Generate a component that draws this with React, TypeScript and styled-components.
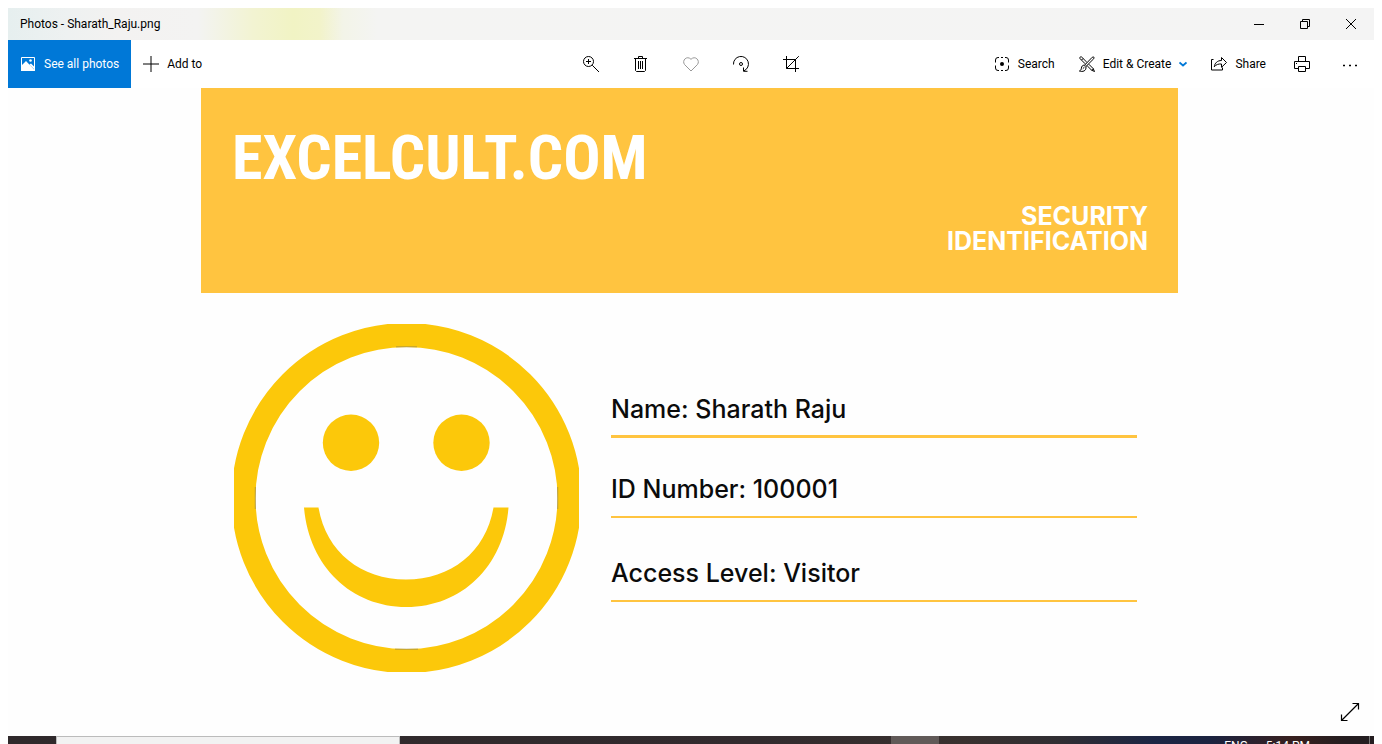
import React from "react";
import styled, { createGlobalStyle } from "styled-components";

const GlobalStyle = createGlobalStyle`
  * { box-sizing: border-box; }
  body { margin: 0; background: #fff; color: #000; font-family: Roboto, "Open Sans", sans-serif; font-size: 12px; }
  button { font: inherit; color: inherit; border: 0; padding: 0; background: none; }
  h1, h2, p, dl, dd { margin: 0; font-weight: inherit; }
`;

const Desktop = styled.div`
  display: flex;
  flex-direction: column;
  min-height: 100vh;
  padding: 8px 8px 0;
`;

const TitleBar = styled.header`
  display: flex;
  align-items: center;
  justify-content: space-between;
  height: 32px;
  padding-left: 12px;
  background: linear-gradient(90deg, #e6efef 0, #eef1f1 60px, #f3f2f1 110px, #f3f3f2 190px, #f2f3d2 245px, #f1f3c4 285px, #f2f3ca 312px, #f3f4e8 335px, #f4f4f3 370px, #f4f4f4 100%);
`;

const WindowTitle = styled.h1`
  font-size: 12px;
  line-height: 16px;
`;

const Group = styled.div<{ $end?: boolean }>`
  display: flex;
  justify-content: ${(p) => (p.$end ? "flex-end" : "flex-start")};
  white-space: nowrap;
`;

const WindowButton = styled.button`
  display: grid;
  place-items: center;
  width: 46px;
  height: 32px;
`;

const Toolbar = styled.nav`
  display: grid;
  grid-template-columns: 1fr auto 1fr;
  height: 48px;
  background: #fff;
`;

const ToolButton = styled.button<{ $primary?: boolean }>`
  display: flex;
  align-items: center;
  gap: 8px;
  height: 48px;
  padding: 0 12px;
  line-height: 16px;
  background: ${(p) => (p.$primary ? "#0078d7" : "transparent")};
  color: ${(p) => (p.$primary ? "#fff" : "#000")};
`;

const IconButton = styled.button<{ $width: number }>`
  display: grid;
  place-items: center;
  width: ${(p) => p.$width}px;
  height: 48px;
`;

const Icon = styled.svg`
  display: block;
  flex: none;
  fill: none;
  stroke: currentColor;
`;

const Stage = styled.main`
  position: relative;
  flex: 1;
  padding: 0 196px 0 193px;
  background: #fefefe;
`;

const Banner = styled.div`
  display: flex;
  flex-direction: column;
  justify-content: space-between;
  height: 205px;
  padding: 34px 30px 39px 31px;
  background: #ffc440;
  color: #fff;
`;

const Company = styled.h2`
  font: 700 62px/72px "Roboto Condensed", "Liberation Sans Narrow", sans-serif;
`;

const CardKind = styled.p`
  align-self: flex-end;
  text-align: right;
  font: 700 25px/25px Inter, sans-serif;
`;

const CardBody = styled.div`
  display: flex;
  gap: 32px;
  padding: 31px 41px 0 33px;
`;

const Fields = styled.dl`
  display: grid;
  flex: 1;
  grid-template-rows: 114px 80px 84px;
  align-items: end;
  align-content: start;
`;

const Field = styled.div<{ $rule: number }>`
  display: flex;
  height: 44px;
  border-bottom: ${(p) => p.$rule}px solid #ffc440;
  font: 500 25px/30px Inter, sans-serif;
  color: #0b0b0b;
  white-space: pre;
`;

const ExpandButton = styled.button`
  position: absolute;
  right: 14px;
  bottom: 14px;
`;

const Taskbar = styled.footer`
  display: flex;
  height: 8px;
  overflow: hidden;
  color: #fff;
  background: linear-gradient(90deg, #2f292b 0, #322b2e 55%, #39312f 70%, #302e33 77%, #1b2544 84%, #1b2340 88%, #38201f 94%, #241d20 98%);
`;

const TaskSearch = styled.input`
  width: 344px;
  height: 40px;
  margin-left: 48px;
  border: 1px solid #bbb;
  border-radius: 0;
  background: #f2f2f2;
`;

const ActiveTask = styled.div`
  width: 48px;
  margin-left: 491px;
  background: #615a58;
`;

const Tray = styled.div`
  display: flex;
  gap: 18px;
  margin-left: auto;
  padding: 2px 59px 0 0;
  border-right: 1px solid #777;
  margin-right: 4px;
  line-height: 16px;
`;

function Smiley() {
  return (
    <Icon width="345" height="348" viewBox="0 0 345 348" role="img" aria-label="Smiling face">
      <circle cx="172.5" cy="174" r="163" stroke="#fcc80a" strokeWidth="24" />
      <g fill="#fcc80a" stroke="none">
        <circle cx="117" cy="118.8" r="28.2" />
        <circle cx="227.5" cy="118.8" r="28.2" />
        <path d="M70 183.5H84.5C92 228 127 255.5 172 255.5S252 228 259.5 183.5H274.5C270 242 228 283 172.5 283S75 242 70 183.5Z" />
      </g>
      <path d="M162 22.8h21M161 325.2h23M21.3 163v22M323.7 163v22" stroke="#9a8a50" strokeWidth=".7" />
    </Icon>
  );
}

const tools = [
  { label: "Zoom", art: <><circle cx="5.5" cy="5.5" r="5" /><path d="M3 5.5h5M5.5 3v5M9.2 9.2 16 16" /></> },
  { label: "Delete", art: <path d="M1 2.5h13M5.5 2.5v-2h4v2M2.5 3v11.5l1 1h8l1-1V3M5.5 5v8M7.5 5v8M9.5 5v8" /> },
  { label: "Add to favorites", color: "#999", art: <path d="M8 15 1.6 8.6C-1.6 4.5 4 -1 8 3.3 12-1 17.6 4.5 14.4 8.6Z" /> },
  { label: "Rotate", art: <><path d="M.5 8.5A7.5 7.5 0 1 1 11 14.8M10.5 11.5v3.8h4" /><circle cx="8" cy="8" r="1.5" /></> },
  { label: "Crop", art: <path d="M3.5 0v12.5H16M0 3.5h12.5V16M3.5 12.5 15.8.2" /> },
];

const fields = [
  { name: "Name: ", value: "Sharath Raju", rule: 3 },
  { name: "ID Number: ", value: "100001", rule: 2 },
  { name: "Access Level: ", value: "Visitor", rule: 2 },
];

export default function App() {
  return (
    <>
      <GlobalStyle />
      <Desktop>
        <TitleBar>
          <WindowTitle>Photos - Sharath_Raju.png</WindowTitle>
          <Group>
            <WindowButton aria-label="Minimize">
              <Icon width="10" height="10" viewBox="0 0 10 10"><path d="M0 5.5h10" /></Icon>
            </WindowButton>
            <WindowButton aria-label="Restore">
              <Icon width="10" height="10" viewBox="0 0 10 10"><path d="M.5 2.5h7v7h-7zM2.5 2.5v-2h7v7h-2" /></Icon>
            </WindowButton>
            <WindowButton aria-label="Close">
              <Icon width="10" height="10" viewBox="0 0 10 10"><path d="m0 0 10 10M10 0 0 10" /></Icon>
            </WindowButton>
          </Group>
        </TitleBar>

        <Toolbar>
          <Group>
            <ToolButton $primary>
              <Icon width="16" height="16" viewBox="0 0 16 16">
                <path d="M1.5 1.5h13v13h-13z" />
                <path d="M1 10 6 5l9 9.500V15H1ZM9.500 8.500 11 7.500l4 4V14Z" fill="currentColor" stroke="none" />
                <circle cx="10.500" cy="4.500" r="1.300" fill="currentColor" stroke="none" />
              </Icon>
              See all photos
            </ToolButton>
            <ToolButton>
              <Icon width="16" height="16" viewBox="0 0 16 16"><path d="M8 0v16M0 8h16" /></Icon>
              Add to
            </ToolButton>
          </Group>
          <Group>
            {tools.map((t) => (
              <IconButton key={t.label} $width={50} aria-label={t.label}>
                <Icon width="16" height="16" viewBox="0 0 16 16" color={t.color}>{t.art}</Icon>
              </IconButton>
            ))}
          </Group>
          <Group $end>
            <ToolButton>
              <Icon width="16" height="16" viewBox="0 0 16 16">
                <path d="M5 1.500H4A2.500 2.500 0 0 0 1.500 4v2.500M1.500 9.500V12A2.500 2.500 0 0 0 4 14.500h1M11 1.500h1A2.500 2.500 0 0 1 14.500 4v2.500M14.500 9.500V12a2.500 2.500 0 0 1-2.500 2.500h-1M7 1.500h2M7 14.500h2" />
                <circle cx="8" cy="8" r="2" fill="currentColor" stroke="none" />
              </Icon>
              Search
            </ToolButton>
            <ToolButton>
              <Icon width="16" height="16" viewBox="0 0 16 16">
                <path d="M6.200 7.800 1 2.600a1.150 1.150 0 0 1 1.600-1.600l5.200 5.200M9.800 8.200l4.400 4.400 1.300 2.900-2.900-1.300-4.400-4.400M2.500 4.100 4.100 2.500M12.600 14.200l1.600-1.600" />
                <path d="M5.600 9.200 13.200 1.300c1.500-1 2.500.2 1.500 1.500L6.900 10.500ZM5.600 9.200c-2.200-.2-3 1.200-3.200 3C2.200 13.800 1.500 14.600.4 15c3 1.100 7.300.2 6.500-4.500M3.800 12.700l1.700-1.700" />
              </Icon>
              Edit &amp; Create
              <Icon width="8" height="8" viewBox="0 0 8 8" color="#0078d7"><path d="m.5 2.500 3.500 3 3.500-3" strokeWidth="1.800" /></Icon>
            </ToolButton>
            <ToolButton>
              <Icon width="16" height="16" viewBox="0 0 16 16">
                <path d="M2.500 3.500h-2v10.500h11v-2.500M3.300 10.800C3.700 7 6.500 4.500 10.500 4.500V1.500l5 5-5 4.800V8C7.500 7.800 5 8.500 3.300 10.800Z" />
              </Icon>
              Share
            </ToolButton>
            <IconButton $width={48} aria-label="Print">
              <Icon width="16" height="16" viewBox="0 0 16 16">
                <path d="M4.500 5.500v-5h7v5M4.500 12.500h-4v-7h15v7h-4M4.500 10.500h7v5h-7zM2 7.500h1" />
              </Icon>
            </IconButton>
            <IconButton $width={48} aria-label="See more">
              <Icon width="16" height="16" viewBox="0 0 16 16">
                <path d="M1 9.500h2M7 9.500h2M13 9.500h2" strokeWidth="1.300" />
              </Icon>
            </IconButton>
          </Group>
        </Toolbar>

        <Stage>
          <Banner>
            <Company>EXCELCULT.COM</Company>
            <CardKind>SECURITY<br />IDENTIFICATION</CardKind>
          </Banner>
          <CardBody>
            <Smiley />
            <Fields>
              {fields.map((f) => (
                <Field key={f.name} $rule={f.rule}><dt>{f.name}</dt><dd>{f.value}</dd></Field>
              ))}
            </Fields>
          </CardBody>
          <ExpandButton aria-label="Full screen">
            <Icon width="20" height="20" viewBox="0 0 20 20">
              <path d="M1.500 18.500 18.500 1.500M12.500 1.500h6v6M1.500 12.500v6h6" strokeWidth="1.200" />
            </Icon>
          </ExpandButton>
        </Stage>

        <Taskbar>
          <TaskSearch type="search" aria-label="Search the computer" />
          <ActiveTask />
          <Tray><span>ENG</span><span>5:14 PM</span></Tray>
        </Taskbar>
      </Desktop>
    </>
  );
}
